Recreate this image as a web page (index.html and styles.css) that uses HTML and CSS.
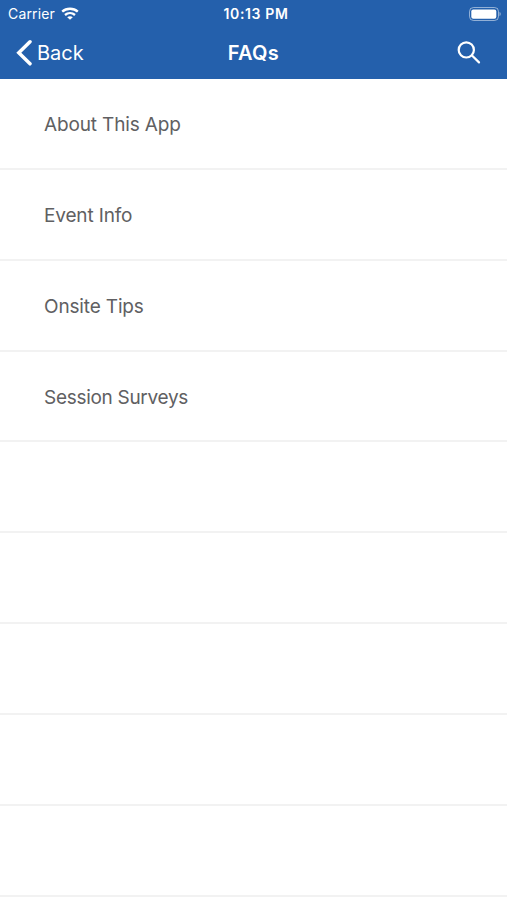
FILE: index.html
```html
<!DOCTYPE html>
<html lang="en">
<head>
<meta charset="utf-8">
<title>FAQs</title>
<link rel="stylesheet" href="styles.css">
</head>
<body>
<header class="header">
  <div class="status">
    <div class="carrier"><span class="carrier-name">Carrier</span>
      <svg class="wifi" width="18" height="13" viewBox="0 0 18 13" fill="none" stroke="#fff" stroke-width="2.400"><path d="M1.200 4.700C5.500.8 12.500.8 16.800 4.700M4 8c2.900-2.500 7.100-2.500 10 0"/><path d="M9 12.800 6.200 10.200c1.500-1.300 4.100-1.300 5.600 0z" fill="#fff" stroke="none"/></svg>
    </div>
    <time class="time">10:13 PM</time>
    <svg class="battery" width="32" height="14" viewBox="0 0 32 14"><rect x=".5" y=".5" width="29" height="13" rx="4" fill="none" stroke="#fff" stroke-opacity=".5"/><rect x="2.300" y="2.500" width="25" height="9.200" rx="2" fill="#fff"/><path d="M30.500 5c1.700.7 1.700 3.300 0 4z" fill="#fff" fill-opacity=".5"/></svg>
  </div>
  <nav class="nav">
    <a class="back"><svg width="16" height="28" viewBox="0 0 16 28" fill="none" stroke="#fff" stroke-width="3.500" stroke-linecap="round"><path d="M14 2.800 2.800 13.800 14 24.800" /></svg><span class="back-label">Back</span></a>
    <h1 class="title">FAQs</h1>
    <svg class="search" width="24" height="24" viewBox="0 0 24 24" fill="none" stroke="#fff" stroke-width="2.200" stroke-linecap="round"><circle cx="9.300" cy="8.900" r="7.600"/><path d="m15 14.500 7 6.900"/></svg>
  </nav>
</header>
<ul class="list">
  <li class="row"><span class="label">About This App</span></li>
  <li class="row"><span class="label">Event Info</span></li>
  <li class="row"><span class="label">Onsite Tips</span></li>
  <li class="row"><span class="label tight">Session Surveys</span></li>
  <li class="row"></li><li class="row"></li><li class="row"></li><li class="row"></li><li class="row"></li>
</ul>
</body>
</html>
```
FILE: styles.css
```css
* { box-sizing: border-box; }
body { margin: 0; height: 900px; overflow: hidden; background: #fff; font-family: Inter, sans-serif; }
.header { height: 79px; background: #2460ac; color: #fff; }
.status { height: 27px; display: grid; grid-template-columns: 1fr auto 1fr; align-items: center; padding: 0 6px 0 8px; }
.carrier { display: flex; align-items: center; gap: 6px; font-size: 14px; letter-spacing: .15px; }
.time { font-size: 14px; font-weight: 600; letter-spacing: .65px; margin-left: 3px; }
.battery { justify-self: end; }
.nav { height: 52px; display: grid; grid-template-columns: 1fr auto 1fr; align-items: center; padding: 0 26px 0 16px; }
.back { display: flex; align-items: center; gap: 5px; font-size: 20px; }
.title { margin: 0 0 0 10px; font-size: 20px; font-weight: 600; letter-spacing: .3px; }
.search { justify-self: end; }
.list { margin: 0; padding: 0; list-style: none; }
.row { height: 90.85px; border-bottom: 2px solid #f2f2f2; display: flex; align-items: center; padding: 3px 0 0 44px; }
.label { font-size: 19px; letter-spacing: -.15px; color: #606062; }
.tight { letter-spacing: -.3px; }
```
